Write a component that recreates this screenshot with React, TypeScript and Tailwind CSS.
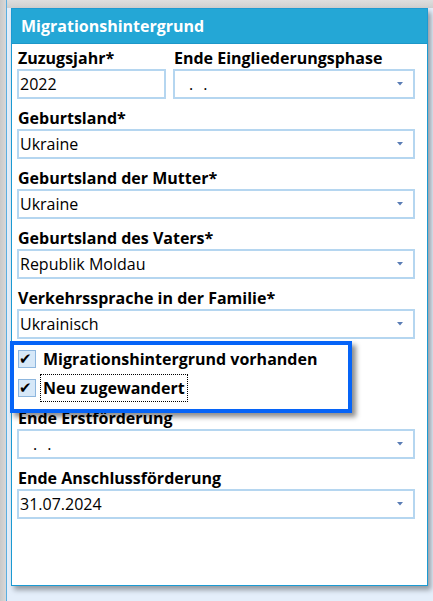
import React from 'react';

const font = { fontFamily: '"Open Sans", "Noto Sans", sans-serif' };

function Arrow() {
  return (
    <svg width="6" height="4" viewBox="0 0 6 4" className="shrink-0">
      <path d="M0 0 H6 L3 3.5 Z" fill="#5a7db5" />
    </svg>
  );
}

function Dots() {
  return (
    <span className="flex-1 whitespace-pre">
      <span className="pl-[13px]">.</span>
      <span className="pl-[10px]">.</span>
    </span>
  );
}

function Field({ label, value, dots, first, select = true }: { label: string; value?: string; dots?: boolean; first?: boolean; select?: boolean }) {
  return (
    <div className={`flex flex-col ${first ? '' : 'pt-[9px]'}`}>
      <div className="h-[20px] leading-[20px] text-[16px] font-bold text-black pl-[1px] whitespace-nowrap">{label}</div>
      <div className="mt-px h-[30px] border-2 border-[#b5d6f0] bg-white flex items-center pl-px pr-[10px] text-[16px] text-black">
        {dots ? <Dots /> : <span className="flex-1">{value}</span>}
        {select && <Arrow />}
      </div>
    </div>
  );
}

function Check({ label, focus }: { label: string; focus?: boolean }) {
  return (
    <div className="h-[29px] flex items-center">
      <div className="w-[18px] h-[18px] border border-[#8db6de] bg-[#d7e8f8] flex items-center justify-center text-[15px] leading-none text-black pr-[3px]">
        ✔
      </div>
      <span className={`ml-[5px] px-[2px] py-[1px] text-[16px] font-bold text-black ${focus ? 'outline-1 outline-dotted outline-black' : ''}`}>
        {label}
      </span>
    </div>
  );
}

export default function App() {
  return (
    <div className="w-[433px] h-[601px] flex bg-[#e4eefa] overflow-hidden" style={font}>
      {/* left neighbour edge */}
      <div className="w-[6px] bg-gradient-to-r from-[#c9c9c9] to-[#d8d8d8]" />
      <div className="w-px bg-[#5aaee0]" />

      <div className="flex-1 flex flex-col">
        <div className="h-[8px] bg-gradient-to-b from-[#dedede] to-[#cfcfcf]" />

        <div className="flex-1 flex pl-[4px] pr-[5px] pb-[15px]">
          <div className="flex-1 flex flex-col border border-[#1b9ad2] bg-white shadow-[3px_4px_5px_rgba(0,0,0,0.35)]">
            {/* header */}
            <div className="h-[35px] bg-[#24a7d6] border-b border-[#1d97c8] flex items-center pl-[9px]">
              <span className="text-[16px] font-bold text-white">Migrationshintergrund</span>
            </div>

            <div className="flex-1 flex flex-col pt-[4px] pl-[5px] pr-[12px]">
              <div className="flex gap-[7px]">
                <div className="w-[149px]">
                  <Field label="Zuzugsjahr*" value="2022" first select={false} />
                </div>
                <div className="flex-1">
                  <Field label="Ende Eingliederungsphase" dots first />
                </div>
              </div>
              <Field label="Geburtsland*" value="Ukraine" />
              <Field label="Geburtsland der Mutter*" value="Ukraine" />
              <Field label="Geburtsland des Vaters*" value="Republik Moldau" />
              <Field label="Verkehrssprache in der Familie*" value="Ukrainisch" />

              <div className="relative pt-[5px] pb-[6px] pl-px">
                <Check label="Migrationshintergrund vorhanden" />
                <Check label="Neu zugewandert" focus />
                {/* highlight annotation */}
                <div className="absolute left-[-7px] top-[2px] w-[342px] h-[72px] border-4 border-[#0664f7] shadow-[4px_4px_5px_rgba(0,0,0,0.45)]" />
              </div>

              <Field label="Ende Erstförderung" dots first />
              <Field label="Ende Anschlussförderung" value="31.07.2024" />
            </div>
          </div>
        </div>
      </div>
    </div>
  );
}
